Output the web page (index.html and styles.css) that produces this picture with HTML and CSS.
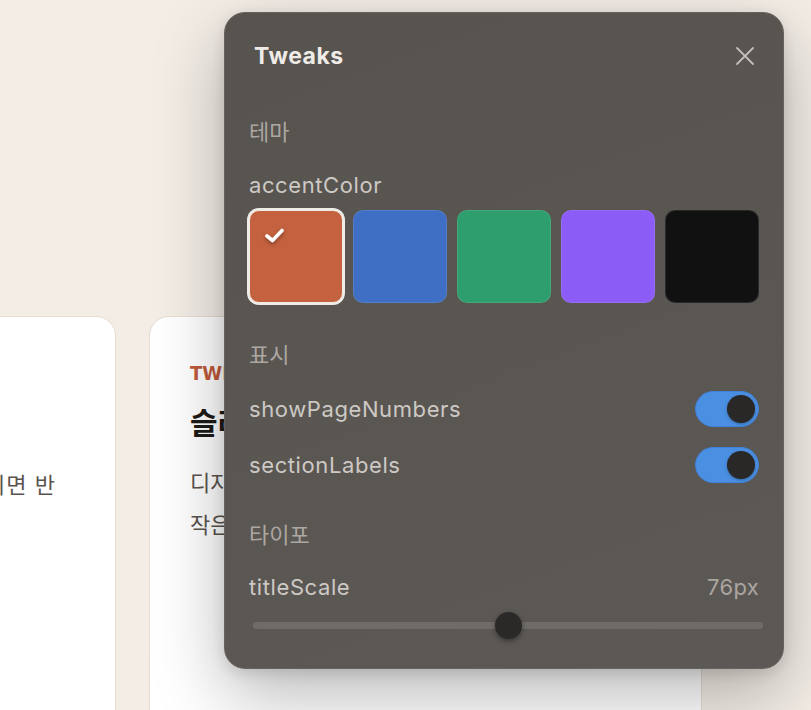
FILE: index.html
```html
<!DOCTYPE html>
<html lang="ko">
<head>
    <meta charset="utf-8">
    <meta name="viewport" content="width=device-width, initial-scale=1.0">
    <title>Tweaks</title>
    <link rel="stylesheet" href="styles.css">
</head>
<body>
    <div class="cards">
        <div class="card card-prev">
            <p class="card-text">슬라이드 한 장이 인쇄 지면 반</p>
        </div>
        <div class="card">
            <p class="card-label">TWEAKS 패널</p>
            <h2 class="card-title">슬라이드 모양 조정</h2>
            <p class="card-text">디자인 값을 바로 바꿔 보세요.<br>작은 변화도 바로 반영됩니다.</p>
        </div>
    </div>

    <div class="tweaks">
        <div class="tweaks-header">
            <h1>Tweaks</h1>
            <button class="close-btn" aria-label="닫기">
                <svg width="20" height="20" viewBox="0 0 20 20"><path d="M2 2 L18 18 M18 2 L2 18" stroke="currentColor" stroke-width="1.8" stroke-linecap="round" fill="none"/></svg>
            </button>
        </div>

        <div class="section-title first">테마</div>
        <div class="field-label">accentColor</div>
        <div class="swatches">
            <button class="swatch selected" style="background:#c4623f">
                <svg class="check" width="22" height="18" viewBox="0 0 22 18"><path d="M3 9 L8.5 13.5 L18 3.5" stroke="#fff" stroke-width="3.6" stroke-linecap="round" stroke-linejoin="round" fill="none"/></svg>
            </button>
            <button class="swatch" style="background:#3f6fc4"></button>
            <button class="swatch" style="background:#2e9e6e"></button>
            <button class="swatch" style="background:#8b5cf6"></button>
            <button class="swatch" style="background:#111111"></button>
        </div>

        <div class="section-title">표시</div>
        <div class="toggle-row">
            <span>showPageNumbers</span>
            <span class="toggle on"><span class="knob"></span></span>
        </div>
        <div class="toggle-row">
            <span>sectionLabels</span>
            <span class="toggle on"><span class="knob"></span></span>
        </div>

        <div class="section-title">타이포</div>
        <div class="slider-head">
            <span>titleScale</span>
            <span class="slider-value">76px</span>
        </div>
        <input class="slider" type="range" min="40" max="112" value="76">
    </div>
</body>
</html>
```

FILE: styles.css
```css
body {
    margin: 0;
    height: 710px;
    overflow: hidden;
    background-color: #f3ede6;
    font-family: "Inter", "Noto Sans CJK KR", sans-serif;
}

/* 뒤쪽 슬라이드 카드 */
.cards {
    display: flex;
    gap: 33px;
    padding-top: 316px;
}
.card {
    flex: none;
    width: 553px;
    height: 520px;
    box-sizing: border-box;
    padding: 44px 40px 0;
    background: #ffffff;
    border: 1px solid #e6ddd2;
    border-radius: 20px;
}
.card-prev {
    width: 300px;
    margin-left: -184px;
    padding: 128px 59px 0 0;
}
.card-prev .card-text {
    text-align: right;
    white-space: nowrap;
    overflow: hidden;
    direction: rtl;
    letter-spacing: 1px;
}
.card-label {
    margin: 0;
    font-family: "DejaVu Sans Condensed", "DejaVu Sans", sans-serif;
    font-weight: bold;
    font-size: 20px;
    line-height: 24px;
    color: #c05a3a;
}
.card-title {
    margin: 18px 0 0;
    font-size: 30px;
    line-height: 40px;
    font-weight: 700;
    color: #1d1a17;
}
.card-text {
    margin: 19px 0 0;
    font-size: 22px;
    line-height: 42px;
    color: #5b544e;
}

/* Tweaks 패널 */
.tweaks {
    position: absolute;
    top: 12px;
    left: 224px;
    width: 560px;
    height: 657px;
    box-sizing: border-box;
    padding: 0 24px;
    background: linear-gradient(160deg, #57534f 0%, #5a5652 55%, #5c5855 100%);
    border: 1px solid #67625d;
    border-radius: 21px;
    box-shadow: 0 26px 70px rgba(0, 0, 0, 0.28), 0 4px 14px rgba(0, 0, 0, 0.12);
    color: #cdc9c4;
    letter-spacing: 0.6px;
}
.tweaks-header {
    display: flex;
    justify-content: space-between;
    align-items: center;
    padding: 29px 4px 0 5px;
}
.tweaks-header h1 {
    margin: 0;
    font-size: 23px;
    line-height: 28px;
    font-weight: 700;
    color: #efece8;
    letter-spacing: 0.5px;
}
.close-btn {
    padding: 0;
    border: none;
    background: none;
    color: #c2beb9;
    cursor: pointer;
    display: flex;
}
.section-title {
    margin-top: 40px;
    font-size: 22px;
    line-height: 24px;
    color: #aca7a1;
    letter-spacing: 0;
}
.section-title.first {
    margin-top: 50px;
}
.field-label {
    margin-top: 29px;
    font-size: 22px;
    line-height: 24px;
}
.swatches {
    display: flex;
    gap: 10px;
    margin-top: 13px;
}
.swatch {
    flex: 1;
    height: 93px;
    padding: 0;
    border: 1px solid rgba(255, 255, 255, 0.1);
    border-radius: 10px;
    cursor: pointer;
    position: relative;
}
.swatch.selected {
    border: 1px solid #efebe6;
    box-shadow: 0 0 0 2px #efebe6;
}
.check {
    position: absolute;
    top: 16px;
    left: 14px;
    filter: drop-shadow(0 2px 2px rgba(0, 0, 0, 0.35));
}
.toggle-row {
    display: flex;
    justify-content: space-between;
    align-items: center;
    height: 36px;
    margin-top: 20px;
    font-size: 22px;
}
.section-title + .toggle-row {
    margin-top: 24px;
}
.toggle {
    display: flex;
    width: 64px;
    height: 36px;
    box-sizing: border-box;
    padding: 3px;
    border: 1px solid #3f82d8;
    border-radius: 18px;
    background: #4b8fe2;
}
.toggle.on {
    justify-content: flex-end;
}
.knob {
    width: 28px;
    height: 28px;
    border-radius: 50%;
    background: #2a2826;
    box-shadow: 0 1px 3px rgba(0, 0, 0, 0.3);
}
.slider-head {
    display: flex;
    justify-content: space-between;
    margin-top: 28px;
    font-size: 22px;
    line-height: 24px;
}
.slider-value {
    color: #aba6a1;
    letter-spacing: 0.3px;
}
.slider {
    -webkit-appearance: none;
    appearance: none;
    display: block;
    width: 510px;
    height: 28px;
    margin: 12px 0 0 4px;
    background: transparent;
}
.slider::-webkit-slider-runnable-track {
    height: 7px;
    border-radius: 4px;
    background: #6f6b67;
}
.slider::-webkit-slider-thumb {
    -webkit-appearance: none;
    width: 27px;
    height: 27px;
    margin-top: -10px;
    border-radius: 50%;
    background: #2b2927;
    box-shadow: 0 2px 5px rgba(0, 0, 0, 0.4);
}
```
